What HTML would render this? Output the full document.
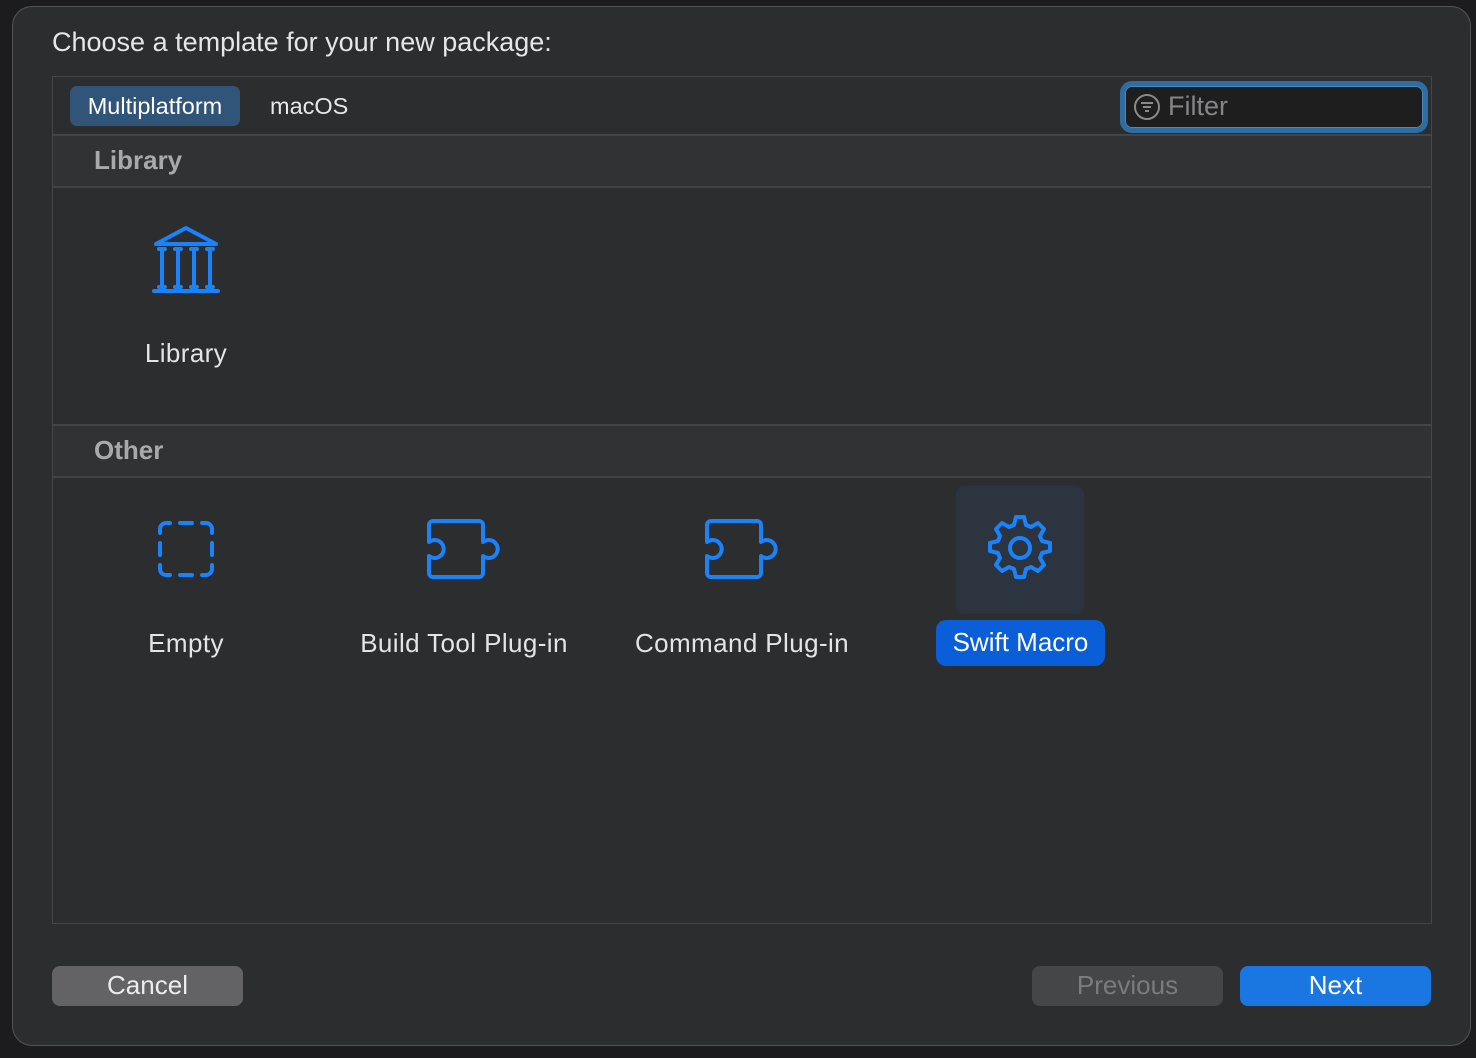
<!DOCTYPE html>
<html><head><style>
*{margin:0;padding:0;box-sizing:border-box}
body{width:1476px;height:1058px;background:#1c1c1e;font-family:"Liberation Sans",sans-serif;position:relative;overflow:hidden}
.win{position:absolute;left:12px;top:6px;width:1459px;height:1040px;background:#2c2d2f;border:1px solid #545456;border-radius:20px}
.abs{position:absolute}
.t{color:#e6e6e6}
.box{position:absolute;left:52px;top:76px;width:1380px;height:848px;border:1px solid #454648;background:#2c2d2f}
.line{position:absolute;left:0;width:100%;height:2px;background:#434446}
.hdr{position:absolute;left:0;width:100%;background:#313234;color:#a9a9ab;font-weight:bold;font-size:26px;padding-left:41px}
.lbl{position:absolute;color:#e4e4e4;font-size:26px;letter-spacing:0.4px;text-align:center;width:280px}
.btn{position:absolute;top:966px;width:191px;height:40px;border-radius:8px;font-size:26px;text-align:center;line-height:39px}
</style></head><body>
<div class="win"></div>
<div class="abs t" style="left:52px;top:27px;font-size:27px">Choose a template for your new package:</div>
<div class="box">
  <div class="abs" style="left:17px;top:9px;width:170px;height:40px;background:#315479;border-radius:7px;color:#fff;font-size:23.5px;line-height:40px;text-align:center">Multiplatform</div>
  <div class="abs" style="left:217px;top:9px;color:#e8e8e8;font-size:23.5px;line-height:40px">macOS</div>
  <div class="abs" style="left:1067px;top:4px;width:308px;height:52px;border:5px solid #2f6da3;border-radius:12px;background:#1e1e1f;box-shadow:inset 0 0 0 1px #4a88c0"></div>
  <svg class="abs" style="left:1080px;top:16px" width="28" height="28" viewBox="0 0 28 28"><circle cx="14" cy="14" r="12" fill="none" stroke="#8a8a8c" stroke-width="2"/><path d="M8 10h12M10 14h8M12 18h4" stroke="#8a8a8c" stroke-width="2"/></svg>
  <div class="abs" style="left:1115px;top:14px;color:#858587;font-size:27px">Filter</div>
  <div class="line" style="top:57px"></div>
  <div class="hdr" style="top:59px;height:50px;line-height:48px">Library</div>
  <div class="line" style="top:109px"></div>
  <div class="line" style="top:347px"></div>
  <div class="hdr" style="top:349px;height:50px;line-height:48px">Other</div>
  <div class="line" style="top:399px"></div>
</div>
<svg class="abs" style="left:150px;top:224px" width="72" height="72" viewBox="0 0 72 72" fill="none" stroke="#1a82fb" stroke-width="4" stroke-linecap="round" stroke-linejoin="round">
<path d="M6 20L36 4L66 20Z"/><path d="M9 30h6M12 30v38M9 68h6M25 30h6M28 30v38M25 68h6M41 30h6M44 30v38M41 68h6M57 30h6M60 30v38M57 68h6" transform="translate(0,-5)"/><path d="M4 67h64"/>
</svg>
<div class="lbl" style="left:46px;top:338px">Library</div>
<svg class="abs" style="left:156px;top:519px" width="60" height="60" viewBox="0 0 60 60" fill="none" stroke="#1a82fb" stroke-width="4" stroke-linecap="round">
<path d="M4 14V10a6 6 0 0 1 6-6h4M46 4h4a6 6 0 0 1 6 6v4M56 46v4a6 6 0 0 1-6 6h-4M14 56h-4a6 6 0 0 1-6-6v-4M24 4h12M24 56h12M4 24v12M56 24v12"/>
</svg>
<div class="lbl" style="left:46px;top:628px">Empty</div>
<svg class="abs" style="left:425px;top:518px" width="80" height="64" viewBox="0 0 80 64" fill="none" stroke="#1a82fb" stroke-width="4" stroke-linejoin="round">
<path d="M8 3h46a4 4 0 0 1 4 4v17a9 9 0 1 1 0 14v17a4 4 0 0 1-4 4H8a4 4 0 0 1-4-4V38a9 9 0 1 0 0-14V7a4 4 0 0 1 4-4z"/>
</svg>
<div class="lbl" style="left:324px;top:628px">Build Tool Plug-in</div>
<svg class="abs" style="left:703px;top:518px" width="80" height="64" viewBox="0 0 80 64" fill="none" stroke="#1a82fb" stroke-width="4" stroke-linejoin="round">
<path d="M8 3h46a4 4 0 0 1 4 4v17a9 9 0 1 1 0 14v17a4 4 0 0 1-4 4H8a4 4 0 0 1-4-4V38a9 9 0 1 0 0-14V7a4 4 0 0 1 4-4z"/>
</svg>
<div class="lbl" style="left:602px;top:628px">Command Plug-in</div>
<div class="abs" style="left:956px;top:486px;width:128px;height:128px;background:#2c3440;border-radius:8px"></div>
<svg class="abs" style="left:985px;top:513px" width="70" height="70" viewBox="-35 -35 70 70" fill="none" stroke="#1a82fb" stroke-width="4" stroke-linejoin="round">
<path d="M-4 -31h8l2 8 5 2 7-4 6 6-4 7 2 5 8 2v8l-8 2-2 5 4 7-6 6-7-4-5 2-2 8h-8l-2-8-5-2-7 4-6-6 4-7-2-5-8-2v-8l8-2 2-5-4-7 6-6 7 4 5-2z"/>
<circle r="10"/>
</svg>
<div class="abs" style="left:936px;top:620px;width:169px;height:46px;background:#0a5fd8;border-radius:10px;color:#fff;font-size:26px;text-align:center;line-height:45px">Swift Macro</div>
<div class="btn" style="left:52px;background:#636366;color:#ececec">Cancel</div>
<div class="btn" style="left:1032px;background:#454648;color:#7b7b7d">Previous</div>
<div class="btn" style="left:1240px;background:#1a76e0;color:#fff">Next</div>
</body></html>
